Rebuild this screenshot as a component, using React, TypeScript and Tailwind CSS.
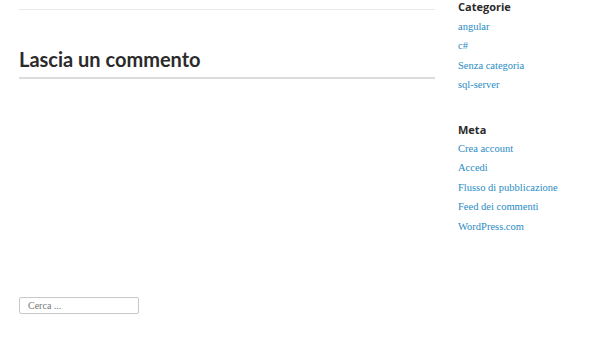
export default function App() {
  const categories = ["angular", "c#", "Senza categoria", "sql-server"];
  const meta = [
    "Crea account",
    "Accedi",
    "Flusso di pubblicazione",
    "Feed dei commenti",
    "WordPress.com",
  ];

  return (
    <div className="flex w-[600px] h-[338px] bg-white overflow-hidden">
      {/* Main column */}
      <div className="ml-[19px] w-[416px] flex flex-col">
        <div className="mt-[9px] border-t border-[#e8e8e8]" />
        <h2 className="mt-[35px] pb-[4px] border-b-2 border-[#dcdcdc] text-[20px] leading-[28px] font-bold text-[#2b2b2b] font-['Lato',sans-serif]">
          Lascia un commento
        </h2>
        <div className="mt-[212px]">
          <input
            type="search"
            placeholder="Cerca ..."
            className="w-[120px] h-[17px] border border-[#c8c8c8] rounded-[2px] pl-[8px] text-[10px] font-['Liberation_Serif',serif] text-[#555] placeholder:text-[#777] outline-none"
          />
        </div>
      </div>

      {/* Sidebar */}
      <aside className="ml-[23px] w-[130px] flex flex-col">
        <h3 className="text-[11px] leading-[14px] font-bold text-[#2b2b2b] font-['Open_Sans',sans-serif]">
          Categorie
        </h3>
        <ul className="mt-[2.5px]">
          {categories.map((c) => (
            <li
              key={c}
              className="text-[10.5px] leading-[19.5px] text-[#2a8bc4] font-['Liberation_Serif',serif]"
            >
              <a href="#">{c}</a>
            </li>
          ))}
        </ul>
        <h3 className="mt-[28px] text-[11px] leading-[14px] font-bold text-[#2b2b2b] font-['Open_Sans',sans-serif]">
          Meta
        </h3>
        <ul className="mt-[2px]">
          {meta.map((m) => (
            <li
              key={m}
              className="text-[10.5px] leading-[19.5px] text-[#2a8bc4] font-['Liberation_Serif',serif]"
            >
              <a href="#">{m}</a>
            </li>
          ))}
        </ul>
      </aside>
    </div>
  );
}
